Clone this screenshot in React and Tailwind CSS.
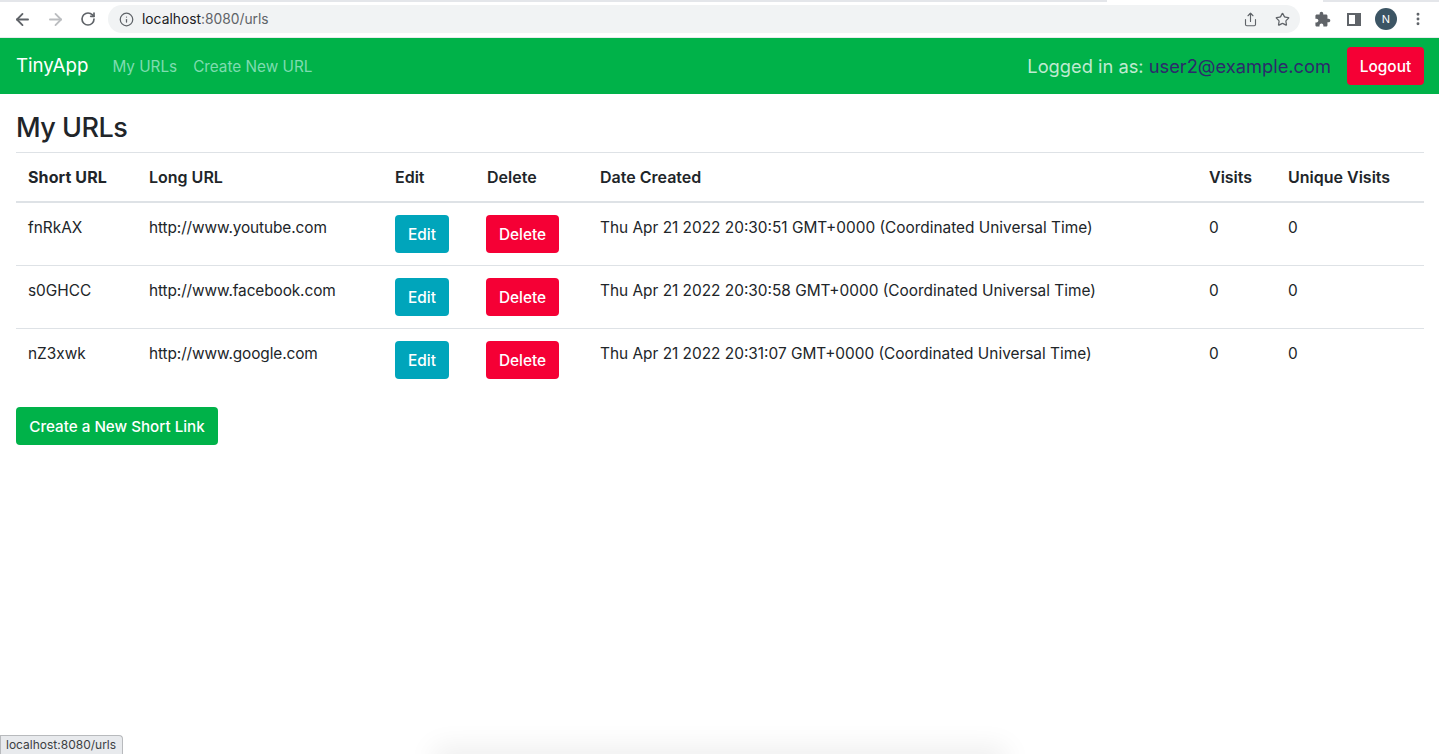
import { ArrowLeft, ArrowRight, RotateCw, Info, Share, Star, EllipsisVertical } from 'lucide-react';

const font = 'font-["Inter","Liberation_Sans",sans-serif]';

const rows = [
  ['fnRkAX', 'http://www.youtube.com', 'Thu Apr 21 2022 20:30:51 GMT+0000 (Coordinated Universal Time)'],
  ['s0GHCC', 'http://www.facebook.com', 'Thu Apr 21 2022 20:30:58 GMT+0000 (Coordinated Universal Time)'],
  ['nZ3xwk', 'http://www.google.com', 'Thu Apr 21 2022 20:31:07 GMT+0000 (Coordinated Universal Time)'],
];

const ExtensionIcon = () => (
  <svg width="17" height="17" viewBox="0 0 24 24" fill="#5f6368">
    <path d="M20.5 11H19V7c0-1.1-.9-2-2-2h-4V3.5C13 2.12 11.88 1 10.5 1S8 2.12 8 3.5V5H4c-1.1 0-1.99.9-1.99 2v3.8H3.5c1.49 0 2.7 1.21 2.7 2.7s-1.21 2.7-2.7 2.7H2V20c0 1.1.9 2 2 2h3.8v-1.5c0-1.49 1.21-2.7 2.7-2.7 1.49 0 2.7 1.21 2.7 2.7V22H17c1.1 0 2-.9 2-2v-4h1.5c1.38 0 2.5-1.12 2.5-2.5S21.88 11 20.5 11z" />
  </svg>
);

const BrowserBar = () => (
  <div className="relative h-[38px] bg-white border-t-2 border-b border-t-[#e4e6ea] border-b-[#e8eaed] flex items-center pb-[1px] text-[#5f6368]">
    <div className="absolute left-[1107px] -top-[2px] h-[2px] w-[216px] bg-white" />
    <div className="w-[108px] flex items-center pl-[13px] gap-[14px] flex-shrink-0">
      <ArrowLeft size={19} strokeWidth={2.3} />
      <ArrowRight size={19} strokeWidth={2.3} className="text-[#bbbdc0]" />
      <RotateCw size={16} strokeWidth={2.5} className="ml-[1px]" />
    </div>
    <div className="w-[1192px] h-[28px] bg-[#f1f3f4] rounded-full flex items-center pl-[11px] pr-[10px]">
      <Info size={15} strokeWidth={2} />
      <span className="ml-[8px] text-[13.8px] text-[#5f6368]"><span className="text-[#202124]">localhost</span>:8080/urls</span>
      <div className="ml-auto flex items-center gap-[17px]">
        <Share size={15} strokeWidth={1.8} />
        <Star size={15} strokeWidth={2} />
      </div>
    </div>
    <div className="flex-1 flex items-center pl-[14px]">
      <ExtensionIcon />
      <div className="ml-[16px] w-[14px] h-[13px] border-2 border-[#5f6368] border-r-[6px] box-border" />
      <div className="ml-[14px] w-[22px] h-[22px] rounded-full bg-[#3c5564] text-white text-[11px] flex items-center justify-center">N</div>
      <EllipsisVertical size={16} strokeWidth={2.4} className="ml-[13px]" />
    </div>
  </div>
);

const NavBar = () => (
  <nav className="h-[56px] bg-[#00b249] flex items-center pl-[16px] pr-[15px]">
    <span className="text-[18.7px] text-white mr-[24px]">TinyApp</span>
    <a className="pt-[2px] text-[15.3px] text-[#7edcb0] mr-[16px]">My URLs</a>
    <a className="pt-[2px] text-[15.3px] text-[#7edcb0]">Create New URL</a>
    <div className="ml-auto flex items-center pt-[2px]">
      <span className="text-[18.3px] text-white/75">Logged in as:&nbsp;</span>
      <span className="text-[18.3px] text-[#2c2a6b]">user2@example.com</span>
      <button className="ml-[16px] -mt-[2px] pt-[2px] h-[38px] w-[77px] rounded-[4px] bg-[#f50035] text-white text-[15.4px] font-medium">Logout</button>
    </div>
  </nav>
);

const App = () => (
  <div className={`${font} relative h-[754px] w-full overflow-hidden bg-white text-[#212529]`}>
    <BrowserBar />
    <NavBar />
    <main className="px-[16px] pr-[15px]">
      <h1 className="h-[58px] pt-[14px] text-[27px] leading-[40px] font-medium tracking-[-0.5px]">My URLs</h1>
      <table className="w-full table-fixed border-collapse text-[15.4px]">
        <colgroup>
          <col className="w-[121px]" />
          <col className="w-[246px]" />
          <col className="w-[91px]" />
          <col className="w-[114px]" />
          <col className="w-[609px]" />
          <col className="w-[79px]" />
          <col />
        </colgroup>
        <thead>
          <tr className="h-[49px] border-t border-b-2 border-t-[#dee2e6] border-b-[#dee2e6] text-left text-[16px]">
            <th className="px-[12px] font-bold tracking-[0.1px]">Short URL</th>
            <th className="px-[12px] font-semibold">Long URL</th>
            <th className="px-[12px] font-semibold">Edit</th>
            <th className="pl-[13px] pr-[12px] font-semibold">Delete</th>
            <th className="px-[12px] font-semibold">Date Created</th>
            <th className="px-[12px] font-semibold">Visits</th>
            <th className="px-[12px] font-semibold">Unique Visits</th>
          </tr>
        </thead>
        <tbody>
          {rows.map(([short, long, date]) => (
            <tr key={short} className="h-[63px] first:h-[64px] border-b border-[#dee2e6] last:border-b-0 align-top">
              <td className="px-[12px] pt-[13px] leading-[24px]">{short}</td>
              <td className="px-[12px] pt-[13px] leading-[24px] whitespace-nowrap tracking-[-0.1px]">{long}</td>
              <td className="px-[12px] pt-[12px]">
                <button className="h-[38px] w-[54px] pt-[2px] rounded-[4px] bg-[#00a5bb] text-white font-medium">Edit</button>
              </td>
              <td className="px-[12px] pt-[12px]">
                <button className="h-[38px] w-[73px] pt-[2px] rounded-[4px] bg-[#f50035] text-white font-medium">Delete</button>
              </td>
              <td className="px-[12px] pt-[13px] leading-[24px] whitespace-nowrap">{date}</td>
              <td className="px-[12px] pt-[13px] leading-[24px]">0</td>
              <td className="px-[12px] pt-[13px] leading-[24px]">0</td>
            </tr>
          ))}
        </tbody>
      </table>
      <button className="mt-[15px] h-[38px] w-[202px] pt-[4px] rounded-[4px] bg-[#00b249] text-white text-[15.2px] font-medium">Create a New Short Link</button>
    </main>
    <div className="absolute left-0 bottom-0 h-[19px] w-[123px] px-[5px] flex items-center bg-[#e8eaed] border border-b-0 border-[#b8babd] rounded-tr-[4px] text-[12px] text-[#3c4043]">localhost:8080/urls</div>
    <div className="absolute left-[440px] -bottom-[14px] h-[14px] w-[560px] shadow-[0_0_28px_6px_rgba(0,0,0,0.08)]" />
  </div>
);

export default App;
